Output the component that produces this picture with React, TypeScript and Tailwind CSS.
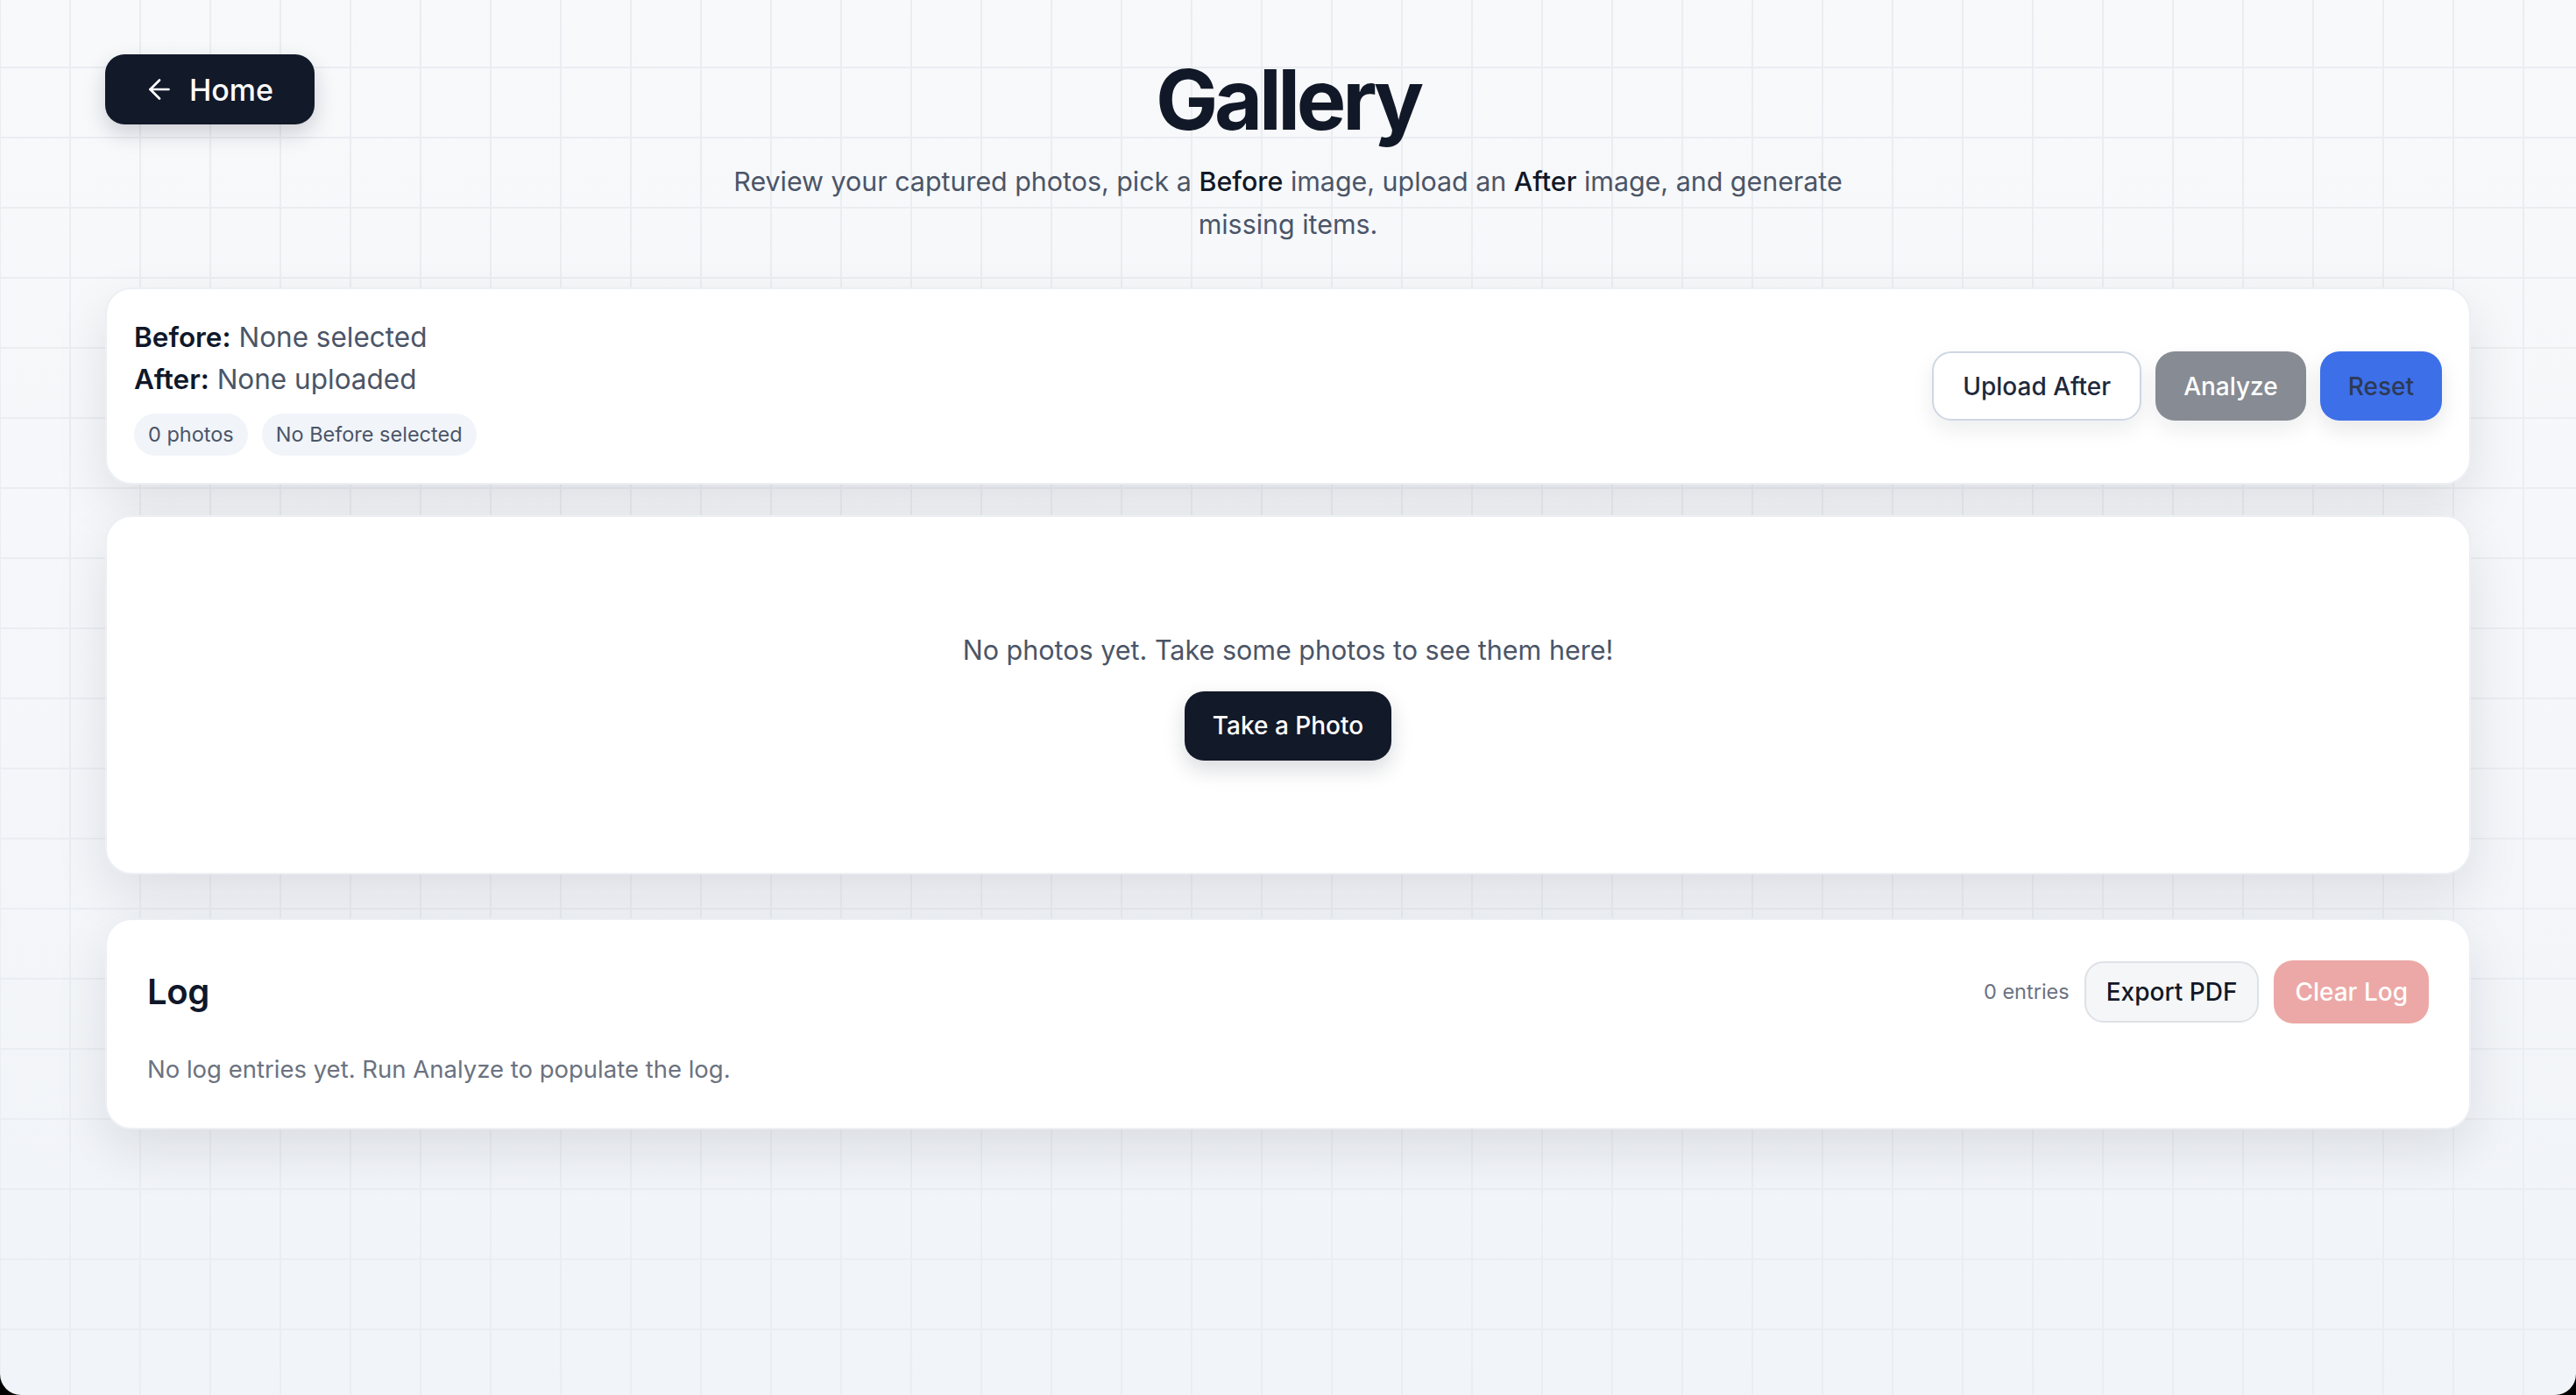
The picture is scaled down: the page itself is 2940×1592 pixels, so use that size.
import { ArrowLeft } from 'lucide-react';

const font = { fontFamily: 'Inter, "Noto Sans", sans-serif' };

export default function App() {
  return (
    <div className="h-screen w-full overflow-hidden bg-black" style={font}>
      <div className="h-full w-full overflow-hidden rounded-b-[24px] bg-[linear-gradient(to_right,#eaedf1_2px,transparent_2px),linear-gradient(to_bottom,#eaedf1_2px,transparent_2px),linear-gradient(to_bottom,#f8f9fb,#f1f4f8)] [background-size:80px_80px,80px_80px,100%_100%] [background-position:-1px_-4px,-1px_-4px,0_0] px-[120px] pt-[62px]">
        {/* Header */}
        <header className="grid grid-cols-[1fr_auto_1fr] items-start">
          <div>
            <button className="flex h-[80px] items-center gap-4 rounded-[22px] bg-[#121929] pl-[44px] pr-[47px] text-[34px] font-medium text-white shadow-[0_10px_24px_rgba(15,23,42,0.18)]">
              <ArrowLeft size={36} strokeWidth={1.8} />
              Home
            </button>
          </div>
          <div className="flex flex-col items-center">
            <h1 className="pt-[3px] text-[95px] font-bold leading-[97px] tracking-[-0.045em] text-[#111827]">
              Gallery
            </h1>
            <p className="mt-[21px] max-w-[1320px] text-center text-[30.4px] leading-[49px] text-[#4b5567]">
              Review your captured photos, pick a <span className="font-medium text-[#111827]">Before</span> image,
              upload an <span className="font-medium text-[#111827]">After</span> image, and generate missing items.
            </p>
          </div>
          <div />
        </header>

        {/* Selection summary */}
        <section className="mt-[47px] flex items-center justify-between rounded-[30px] border-2 border-[#eceff3] bg-white p-[31px] shadow-[0_24px_60px_rgba(15,23,42,0.10)]">
          <div>
            <p className="text-[31.5px] leading-[48px] text-[#4b5567]">
              <span className="font-semibold text-[#0f172a]">Before:</span> None selected
            </p>
            <p className="text-[31.5px] leading-[48px] text-[#4b5567]">
              <span className="font-semibold text-[#0f172a]">After:</span> None uploaded
            </p>
            <div className="mt-[15px] flex gap-4">
              <span className="flex h-[48px] items-center rounded-full bg-[#f1f4f9] px-[16px] text-[23.5px] text-[#4b5567]">
                0 photos
              </span>
              <span className="flex h-[48px] items-center rounded-full bg-[#f1f4f9] px-[16px] text-[23.5px] text-[#4b5567]">
                No Before selected
              </span>
            </div>
          </div>
          <div className="flex items-center gap-4">
            <button className="h-[79px] rounded-[22px] border-2 border-[#cfd7e3] bg-white px-[33px] text-[28px] font-medium text-[#1e293b] shadow-[0_10px_24px_rgba(15,23,42,0.08)]">
              Upload After
            </button>
            <button className="h-[79px] rounded-[22px] bg-[#878b93] px-[32px] text-[28px] font-medium text-white shadow-[0_10px_24px_rgba(15,23,42,0.08)]">
              Analyze
            </button>
            <button className="h-[79px] rounded-[22px] bg-[#3d6fe9] px-[32px] text-[28px] font-medium text-[#2d3a55] shadow-[0_10px_24px_rgba(15,23,42,0.10)]">
              Reset
            </button>
          </div>
        </section>

        {/* Photos */}
        <section className="mt-[35px] flex min-h-[410px] flex-col items-center justify-center rounded-[30px] border-2 border-[#eceff3] bg-white shadow-[0_24px_60px_rgba(15,23,42,0.10)]">
          <p className="text-[30.5px] leading-[45px] text-[#4b5567]">No photos yet. Take some photos to see them here!</p>
          <button className="mt-[25px] h-[79px] rounded-[22px] bg-[#121929] px-[32px] text-[28px] font-medium text-white shadow-[0_10px_24px_rgba(15,23,42,0.16)]">
            Take a Photo
          </button>
        </section>

        {/* Log */}
        <section className="mt-[50px] rounded-[30px] border-2 border-[#eceff3] bg-white p-[46px] shadow-[0_24px_60px_rgba(15,23,42,0.10)]">
          <div className="flex items-center justify-between">
            <h2 className="text-[40px] font-semibold leading-none tracking-[-0.01em] text-[#0f172a]">Log</h2>
            <div className="flex items-center gap-[17px]">
              <span className="text-[23.5px] text-[#6b7280]">0 entries</span>
              <button className="h-[70px] rounded-[22px] border-2 border-[#dde1e7] bg-[#f5f6f8] px-[23px] text-[28px] font-medium text-[#111827]">
                Export PDF
              </button>
              <button className="h-[72px] rounded-[22px] bg-[#eca8a6] px-[24px] text-[28px] font-medium text-white">
                Clear Log
              </button>
            </div>
          </div>
          <p className="mt-[31px] text-[27.5px] leading-[42px] text-[#6b7280]">
            No log entries yet. Run Analyze to populate the log.
          </p>
        </section>
      </div>
    </div>
  );
}
